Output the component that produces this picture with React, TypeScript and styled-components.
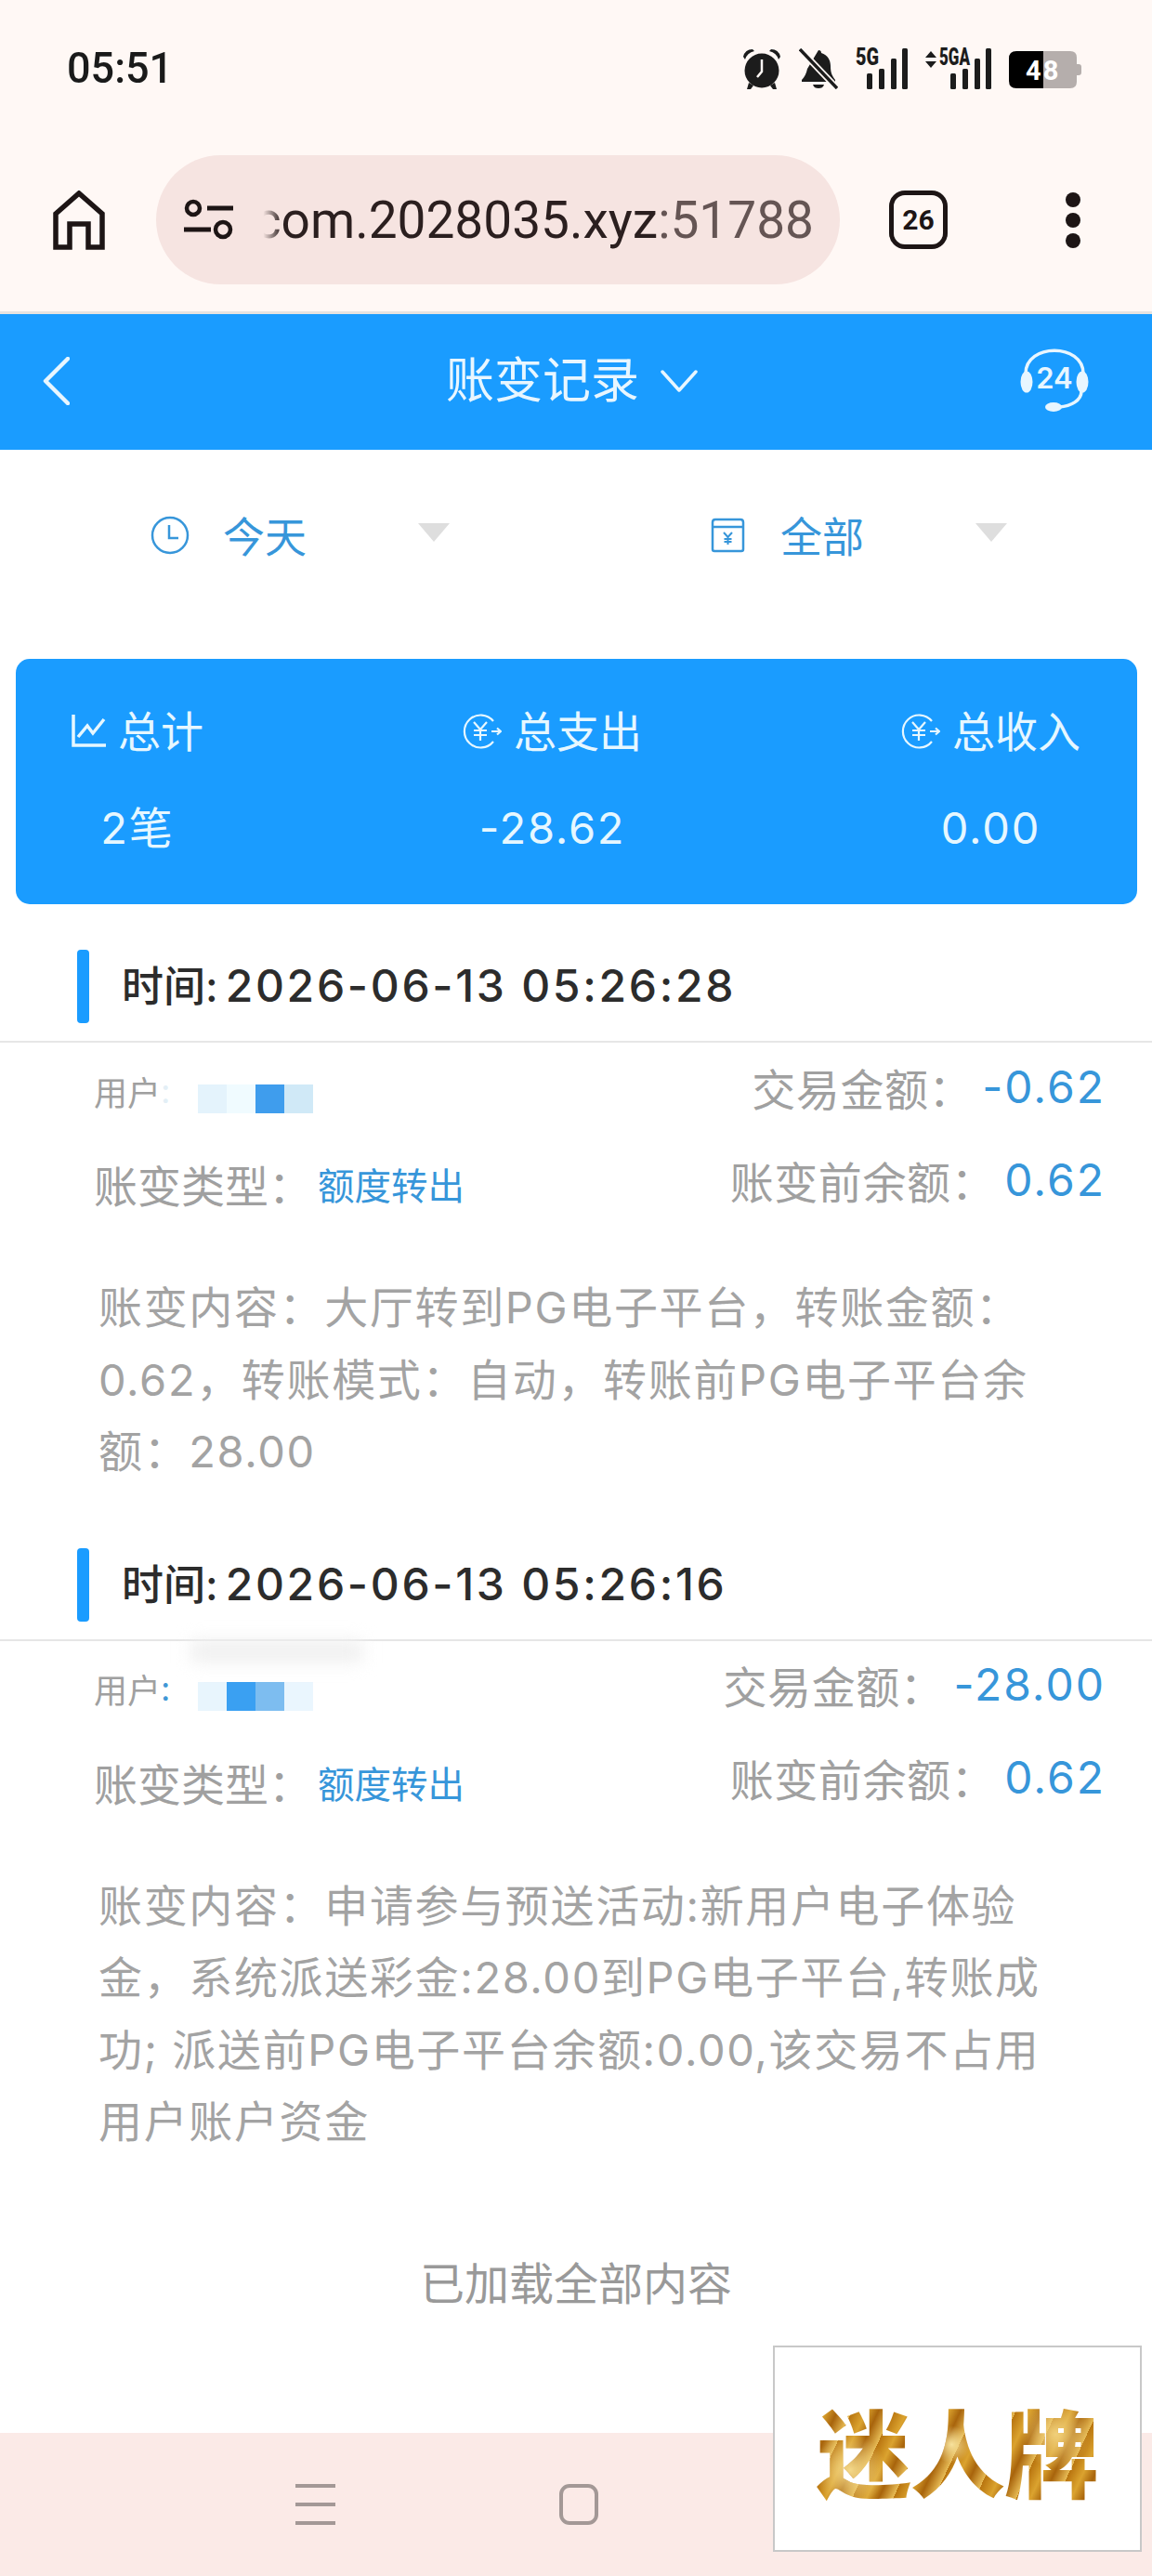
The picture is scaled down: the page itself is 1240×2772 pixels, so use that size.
import React, {FC} from 'react'
import styled, {createGlobalStyle} from 'styled-components'

const sans = `Inter, "Noto Sans CJK SC", sans-serif`

const GlobalStyle = createGlobalStyle`
  html, body {
    margin: 0;
    padding: 0;
    background: #fff;
    font-family: ${sans};
  }
  * {
    box-sizing: border-box;
  }
`

const Phone = styled.div`
  position: relative;
  width: 1240px;
  height: 2772px;
  display: flex;
  flex-direction: column;
  overflow: hidden;
  background: #fff;
`

const Chrome = styled.div`
  height: 338px;
  flex-shrink: 0;
  background: #fff8f5;
  border-bottom: 3px solid #e6e3e1;
`

const StatusBar = styled.div`
  height: 147px;
  padding: 50px 76px 0 72px;
  display: flex;
  align-items: flex-start;
  justify-content: space-between;
`

const Clock = styled.div`
  font-family: Roboto, sans-serif;
  font-size: 45px;
  font-weight: 500;
  line-height: 48px;
  color: #1a1a1a;
  transform: scaleY(1.03);
`

const StatusIcons = styled.div`
  display: flex;
  align-items: flex-start;
  gap: 19px;
  padding-top: 2px;
`

const SignalSvg = styled.svg`
  margin-top: -8px;
`

const BatterySvg = styled.svg`
  margin-top: 3px;
`

const BrowserBar = styled.div`
  display: flex;
  align-items: center;
  padding: 20px 0 0 57px;
`

const HomeButton = styled.svg`
  width: 56px;
  height: 64px;
  margin-right: 55px;
  flex-shrink: 0;
`

const UrlPill = styled.div`
  width: 736px;
  height: 139px;
  border-radius: 70px;
  background: #f6e4e1;
  display: flex;
  align-items: center;
  padding: 0 28px 0 29px;
  flex-shrink: 0;
`

const TuneIcon = styled.svg`
  width: 54px;
  height: 46px;
  flex-shrink: 0;
`

const UrlClip = styled.div`
  position: relative;
  flex: 1;
  margin-left: 24px;
  overflow: hidden;
  display: flex;
  justify-content: flex-end;
  white-space: nowrap;
  font-family: Roboto, sans-serif;
  font-size: 55px;
  line-height: 70px;
  color: #2b1f1f;

  &::before {
    content: '';
    position: absolute;
    left: 0;
    top: 0;
    bottom: 0;
    width: 28px;
    z-index: 1;
    background: linear-gradient(90deg, #f6e4e1 30%, rgba(246, 228, 225, 0));
  }
`

const UrlPort = styled.span`
  color: #655554;
`

const TabCount = styled.div`
  width: 63px;
  height: 63px;
  margin-left: 53px;
  border: 5px solid #1d1515;
  border-radius: 17px;
  display: flex;
  align-items: center;
  justify-content: center;
  flex-shrink: 0;
  font-family: Roboto, sans-serif;
  font-size: 30px;
  font-weight: 700;
  color: #1d1515;
`

const MenuDots = styled.div`
  margin-left: 127px;
  display: flex;
  flex-direction: column;
  gap: 6px;

  i {
    display: block;
    width: 16px;
    height: 16px;
    border-radius: 50%;
    background: #1d1515;
  }
`

const PageHeader = styled.header`
  height: 146px;
  flex-shrink: 0;
  background: #1a9cff;
  display: flex;
  align-items: center;
  justify-content: space-between;
  padding: 0 68px 2px 46px;
  color: #e8f6ff;
`

const HeaderTitle = styled.div`
  display: flex;
  align-items: center;
  gap: 23px;
  margin-left: 58px;
  font-size: 52px;
  line-height: 60px;
`

const FilterBar = styled.div`
  height: 225px;
  flex-shrink: 0;
  display: grid;
  grid-template-columns: 603px 1fr;
  padding-bottom: 42px;
`

const FilterItem = styled.div<{ $inset: number }>`
  display: flex;
  align-items: center;
  padding-left: ${p => p.$inset}px;
  color: #3796da;
  font-size: 45px;
`

const FilterLabel = styled.span<{ $gap: number }>`
  margin-left: ${p => p.$gap}px;
  width: 90px;
`

const FilterCaret = styled.i<{ $gap: number }>`
  width: 0;
  height: 0;
  margin: -6px 0 0 ${p => p.$gap}px;
  border-left: 17px solid transparent;
  border-right: 17px solid transparent;
  border-top: 20px solid #dedede;
`

const SummaryCard = styled.section`
  height: 264px;
  margin: 0 16px 0 17px;
  flex-shrink: 0;
  border-radius: 15px;
  background: #1a9cff;
  padding: 48px 61px 0 60px;
  display: flex;
  justify-content: space-between;
  color: #e6f7ff;
`

const SummaryColumn = styled.div`
  display: flex;
  flex-direction: column;
  align-items: center;
`

const SummaryLabel = styled.div`
  display: flex;
  align-items: center;
  gap: 13px;
  font-size: 46px;
  line-height: 60px;
`

const SummaryValue = styled.div`
  margin-top: 44px;
  font-size: 47px;
  line-height: 60px;
  letter-spacing: 1.8px;
`

const RecordList = styled.main`
  flex: 1;
  padding-top: 50px;
`

const Record = styled.article`
  margin-bottom: 66px;
`

const RecordHead = styled.div`
  display: flex;
  align-items: center;
  height: 99px;
  padding: 0 0 20px 83px;
  border-bottom: 2px solid #e6e6e6;
`

const RecordMark = styled.i`
  width: 13px;
  height: 79px;
  border-radius: 4px;
  background: #1a9cff;
`

const RecordTime = styled.div`
  margin-left: 35px;
  font-size: 45px;
  font-weight: 500;
  line-height: 60px;
  color: #2c2c2c;
`

const TimeDigits = styled.span`
  margin-left: 8px;
  font-size: 48px;
  letter-spacing: 2.700px;
`

const DetailRow = styled.div`
  height: 100px;
  padding: 0 50px 0 101px;
  display: flex;
  align-items: center;
  justify-content: space-between;
`

const DetailLeft = styled.div`
  display: flex;
  align-items: center;
  padding-top: 3px;
`

const DetailRight = styled.div`
  display: flex;
  align-items: center;
  padding-bottom: 6px;
  font-size: 47px;
  letter-spacing: 0.6px;
  color: #a0a0a0;
`

const UserLabel = styled.span`
  font-size: 36px;
  color: #a0a0a0;
`

const UserColon = styled.span<{ $faint?: boolean }>`
  font-size: 36px;
  color: ${p => (p.$faint ? '#e3eff6' : '#3f97d6')};
`

const Mosaic = styled.div`
  display: flex;
  height: 31px;
  margin: 17px 0 0 30px;
`

const MosaicCell = styled.i<{ $color: string }>`
  width: 31px;
  background: ${p => p.$color};
`

const TypeLabel = styled.span`
  font-size: 47px;
  color: #a0a0a0;
`

const TypeValue = styled.span`
  margin-left: 6px;
  font-size: 39.500px;
  color: #3796da;
`

const Amount = styled.span`
  margin-left: 10px;
  font-size: 48px;
  letter-spacing: 2px;
  color: #3796da;
`

const RecordText = styled.p`
  margin: 46px 0 0;
  padding: 0 0 0 106px;
  font-size: 47px;
  line-height: 77.5px;
  letter-spacing: 1.65px;
  white-space: nowrap;
  color: #a3a3a3;
`

const RedactSmudge = styled.i`
  position: absolute;
  left: 205px;
  top: 1765px;
  width: 185px;
  height: 24px;
  background: #f0f0f0;
  filter: blur(9px);
`

const LoadedHint = styled.div`
  margin-top: 106px;
  text-align: center;
  font-size: 48px;
  line-height: 60px;
  color: #999;
`

const NavBar = styled.nav`
  height: 154px;
  flex-shrink: 0;
  background: #fbeae7;
  display: flex;
  align-items: flex-start;
  padding: 55px 0 0 318px;
`

const NavMenu = styled.div`
  width: 43px;
  height: 44px;
  display: flex;
  flex-direction: column;
  justify-content: space-between;

  i {
    display: block;
    height: 4px;
    background: #a39896;
  }
`

const NavHome = styled.div`
  width: 42px;
  height: 44px;
  margin-left: 241px;
  border: 4px solid #a39896;
  border-radius: 11px;
`

const Watermark = styled.div`
  position: absolute;
  left: 832px;
  top: 2524px;
  width: 397px;
  height: 222px;
  background: #fff;
  border: 2px solid #c8c8c8;
  display: flex;
  align-items: center;
  justify-content: center;
`

const WatermarkText = styled.div`
  font-family: "Noto Sans CJK SC", sans-serif;
  font-size: 102px;
  font-weight: 900;
  line-height: 110px;
  letter-spacing: -1px;
  margin-top: 2px;
  color: transparent;
  background:
    radial-gradient(circle at 12% 70%, #f4d98a 0, rgba(244, 217, 138, 0) 14%),
    radial-gradient(circle at 48% 45%, #f7e29c 0, rgba(247, 226, 156, 0) 12%),
    radial-gradient(circle at 85% 35%, #f0cf7a 0, rgba(240, 207, 122, 0) 14%),
    repeating-linear-gradient(115deg, #b8740f 0, #dba32f 14px, #a8640c 26px, #e7bb55 40px);
  -webkit-background-clip: text;
  background-clip: text;
`

const AlarmIcon: FC = () => (
  <svg width="42" height="44" viewBox="0 0 42 44">
    <circle cx="21" cy="24" r="18.5" fill="#1c1c1c" />
    <path d="M21 12v13l-5 6" fill="none" stroke="#fff8f5" strokeWidth="2.5" />
    <path d="M1 9 Q3 1 11 1 L13 3 Q5 5 3 12Z M41 9 Q39 1 31 1 L29 3 Q37 5 39 12Z" fill="#1c1c1c" />
    <path d="M7 37 L5 44 H9 L12 40Z M35 37 L37 44 H33 L30 40Z" fill="#1c1c1c" />
  </svg>
)

const BellOffIcon: FC = () => (
  <svg width="42" height="44" viewBox="0 0 42 44">
    <path d="M21 2c2 0 3 1 3 3 7 2 10 8 10 14 0 8 2 11 5 15v2H3v-2c3-3 5-7 6-12z" fill="#1c1c1c" />
    <path d="M15 39h12c-1 3-3 4-6 4s-5-1-6-4z" fill="#1c1c1c" />
    <path d="M1 1 L41 43" stroke="#fff8f5" strokeWidth="7" />
    <path d="M1 1 L41 43" stroke="#1c1c1c" strokeWidth="3.4" />
  </svg>
)

const SignalIcon: FC<{ width: number, label: string, updown?: boolean }> = ({width, label, updown}) => {
  const barX = width - 44
  return (
    <SignalSvg width={width} height="52" viewBox={`0 -8 ${width} 52`}>
      {updown && <path d="M0 10 L6 3 L12 10Z M0 14 H12 L6 21Z" fill="#1c1c1c" />}
      <text
        x={updown ? 15 : 0}
        y="18"
        fontFamily="Roboto, sans-serif"
        fontWeight="900"
        fontSize="25"
        fill="#1c1c1c"
        textLength={updown ? 33 : 25}
        lengthAdjust="spacingAndGlyphs"
      >
        {label}
      </text>
      <rect x={barX} y="27" width="6" height="17" rx="1.5" fill="#1c1c1c" />
      <rect x={barX + 13} y="22" width="6" height="22" rx="1.5" fill="#1c1c1c" />
      <rect x={barX + 26} y="11" width="6" height="33" rx="1.5" fill="#1c1c1c" />
      <rect x={barX + 38} y="0" width="6" height="44" rx="1.5" fill="#1c1c1c" />
    </SignalSvg>
  )
}

const BatteryIcon: FC = () => (
  <BatterySvg width="78" height="40" viewBox="0 0 78 40">
    <path d="M37 0 H66 Q73 0 73 7 V33 Q73 40 66 40 H37Z" fill="#b5aeac" />
    <path d="M73 14 H75 Q78 14 78 17 V23 Q78 26 75 26 H73Z" fill="#b5aeac" />
    <path d="M37 0 H8 Q0 0 0 8 V32 Q0 40 8 40 H37Z" fill="#000" />
    <text x="18" y="30.500" fontFamily="Roboto, sans-serif" fontWeight="700" fontSize="29" letterSpacing="2" fill="#fff">48</text>
  </BatterySvg>
)

const BackIcon: FC = () => (
  <svg width="29" height="52" viewBox="0 0 29 52">
    <path d="M27 2 L3 26 L27 50" fill="none" stroke="#e8f6ff" strokeWidth="4.5" strokeLinecap="round" strokeLinejoin="round" />
  </svg>
)

const TitleChevron: FC = () => (
  <svg width="40" height="24" viewBox="0 0 40 24">
    <path d="M2 2 L20 22 L38 2" fill="none" stroke="#e8f6ff" strokeWidth="3.5" strokeLinecap="round" strokeLinejoin="round" />
  </svg>
)

const HeadsetIcon: FC = () => (
  <svg width="74" height="70" viewBox="0 0 74 70">
    <path d="M6 27 C6 -6 68 -6 68 27" fill="none" stroke="#e8f6ff" strokeWidth="3.5" />
    <path d="M66 46 C66 56 55 62 42 63" fill="none" stroke="#e8f6ff" strokeWidth="3.5" />
    <ellipse cx="7" cy="36" rx="6.500" ry="11.500" fill="#e8f6ff" />
    <ellipse cx="67" cy="36" rx="6.500" ry="11.500" fill="#e8f6ff" />
    <ellipse cx="36" cy="63" rx="9" ry="5" fill="#e8f6ff" />
    <text x="37" y="43" textAnchor="middle" fontFamily="Inter, sans-serif" fontWeight="600" fontSize="31" fill="#e8f6ff">24</text>
  </svg>
)

const ClockIcon: FC = () => (
  <svg width="42" height="42" viewBox="0 0 42 42">
    <circle cx="21" cy="21" r="19" fill="none" stroke="#3796da" strokeWidth="2.5" />
    <path d="M20 10 V24 H30" fill="none" stroke="#3796da" strokeWidth="2.5" />
  </svg>
)

const LedgerIcon: FC = () => (
  <svg width="37" height="38" viewBox="0 0 37 38">
    <path d="M2 10 V5 Q2 2 5 2 H32 Q35 2 35 5 V10 M2 10 H35 V34 Q35 36 33 36 H4 Q2 36 2 34Z" fill="none" stroke="#3796da" strokeWidth="2.5" />
    <path d="M14 16 L18.500 21 L23 16 M18.500 21 V29 M14.500 23 H22.500 M14.500 26 H22.500" fill="none" stroke="#3796da" strokeWidth="2" />
  </svg>
)

const ChartIcon: FC = () => (
  <svg width="37" height="36" viewBox="0 0 37 36">
    <path d="M2 0 V33 H37" fill="none" stroke="#e6f7ff" strokeWidth="3.5" />
    <path d="M7 24 L17 12 L23 20 L35 5" fill="none" stroke="#e6f7ff" strokeWidth="3.5" />
  </svg>
)

const CoinIcon: FC = () => (
  <svg width="42" height="38" viewBox="0 0 42 38">
    <path d="M33 8 A17.500 17.500 0 1 0 33 30" fill="none" stroke="#e6f7ff" strokeWidth="2.200" />
    <path d="M12 9 L19 17 L26 9 M19 17 V29 M12 18 H26 M12 23 H26" fill="none" stroke="#e6f7ff" strokeWidth="2.200" />
    <path d="M31 19 H40 M37 15.500 L41 19 L37 22.500" fill="none" stroke="#e6f7ff" strokeWidth="2.200" />
  </svg>
)

type RecordData = {
  time: string
  amount: string
  before: string
  faintColon?: boolean
  mosaic: string[]
  lines: string[]
}

const records: RecordData[] = [
  {
    time: '2026-06-13 05:26:28',
    amount: '-0.62',
    before: '0.62',
    faintColon: true,
    mosaic: ['#e4f3fc', '#f0fbff', '#3f9ded', '#d0e9f7'],
    lines: ['账变内容：大厅转到PG电子平台，转账金额：', '0.62，转账模式：自动，转账前PG电子平台余', '额：28.00'],
  },
  {
    time: '2026-06-13 05:26:16',
    amount: '-28.00',
    before: '0.62',
    mosaic: ['#e8f5fd', '#3aa0f2', '#7dbdf0', '#eaf6fe'],
    lines: ['账变内容：申请参与预送活动:新用户电子体验', '金，系统派送彩金:28.00到PG电子平台,转账成', '功; 派送前PG电子平台余额:0.00,该交易不占用', '用户账户资金'],
  },
]

const App: FC = () => {
  return (
    <Phone>
      <GlobalStyle />
      <Chrome>
        <StatusBar>
          <Clock>05:51</Clock>
          <StatusIcons>
            <AlarmIcon />
            <BellOffIcon />
            <SignalIcon width={56} label="5G" />
            <SignalIcon width={71} label="5GA" updown />
            <BatteryIcon />
          </StatusIcons>
        </StatusBar>
        <BrowserBar>
          <HomeButton viewBox="0 0 56 64">
            <path d="M3 25 L28 3 L53 25 V61 H38 V36 H18 V61 H3Z" fill="none" stroke="#1d1515" strokeWidth="5.500" />
          </HomeButton>
          <UrlPill>
            <TuneIcon viewBox="0 0 54 46">
              <circle cx="11" cy="10" r="7" fill="none" stroke="#1d1515" strokeWidth="4.500" />
              <path d="M26 10 H54 M1 33 H30" stroke="#1d1515" strokeWidth="5" />
              <circle cx="43" cy="33" r="8" fill="none" stroke="#1d1515" strokeWidth="4.500" />
            </TuneIcon>
            <UrlClip>
              <span>com.2028035.xyz<UrlPort>:51788</UrlPort></span>
            </UrlClip>
          </UrlPill>
          <TabCount>26</TabCount>
          <MenuDots><i /><i /><i /></MenuDots>
        </BrowserBar>
      </Chrome>

      <PageHeader>
        <BackIcon />
        <HeaderTitle>账变记录<TitleChevron /></HeaderTitle>
        <HeadsetIcon />
      </PageHeader>

      <FilterBar>
        <FilterItem $inset={162}>
          <ClockIcon />
          <FilterLabel $gap={36}>今天</FilterLabel>
          <FilterCaret $gap={120} />
        </FilterItem>
        <FilterItem $inset={162}>
          <LedgerIcon />
          <FilterLabel $gap={38}>全部</FilterLabel>
          <FilterCaret $gap={120} />
        </FilterItem>
      </FilterBar>

      <SummaryCard>
        <SummaryColumn>
          <SummaryLabel><ChartIcon />总计</SummaryLabel>
          <SummaryValue>2笔</SummaryValue>
        </SummaryColumn>
        <SummaryColumn>
          <SummaryLabel><CoinIcon />总支出</SummaryLabel>
          <SummaryValue>-28.62</SummaryValue>
        </SummaryColumn>
        <SummaryColumn>
          <SummaryLabel><CoinIcon />总收入</SummaryLabel>
          <SummaryValue>0.00</SummaryValue>
        </SummaryColumn>
      </SummaryCard>

      <RecordList>
        {records.map(r => (
          <Record key={r.time}>
            <RecordHead>
              <RecordMark />
              <RecordTime>时间:<TimeDigits>{r.time}</TimeDigits></RecordTime>
            </RecordHead>
            <DetailRow>
              <DetailLeft>
                <UserLabel>用户</UserLabel>
                <UserColon $faint={r.faintColon}>:</UserColon>
                <Mosaic>
                  {r.mosaic.map((c, i) => <MosaicCell key={i} $color={c} />)}
                </Mosaic>
              </DetailLeft>
              <DetailRight>交易金额：<Amount>{r.amount}</Amount></DetailRight>
            </DetailRow>
            <DetailRow>
              <DetailLeft>
                <TypeLabel>账变类型：</TypeLabel>
                <TypeValue>额度转出</TypeValue>
              </DetailLeft>
              <DetailRight>账变前余额：<Amount>{r.before}</Amount></DetailRight>
            </DetailRow>
            <RecordText>
              {r.lines.map(l => <React.Fragment key={l}>{l}<br /></React.Fragment>)}
            </RecordText>
          </Record>
        ))}
        <LoadedHint>已加载全部内容</LoadedHint>
      </RecordList>

      <NavBar>
        <NavMenu><i /><i /><i /></NavMenu>
        <NavHome />
      </NavBar>

      <RedactSmudge />
      <Watermark>
        <WatermarkText>迷人牌</WatermarkText>
      </Watermark>
    </Phone>
  )
}

export default App
